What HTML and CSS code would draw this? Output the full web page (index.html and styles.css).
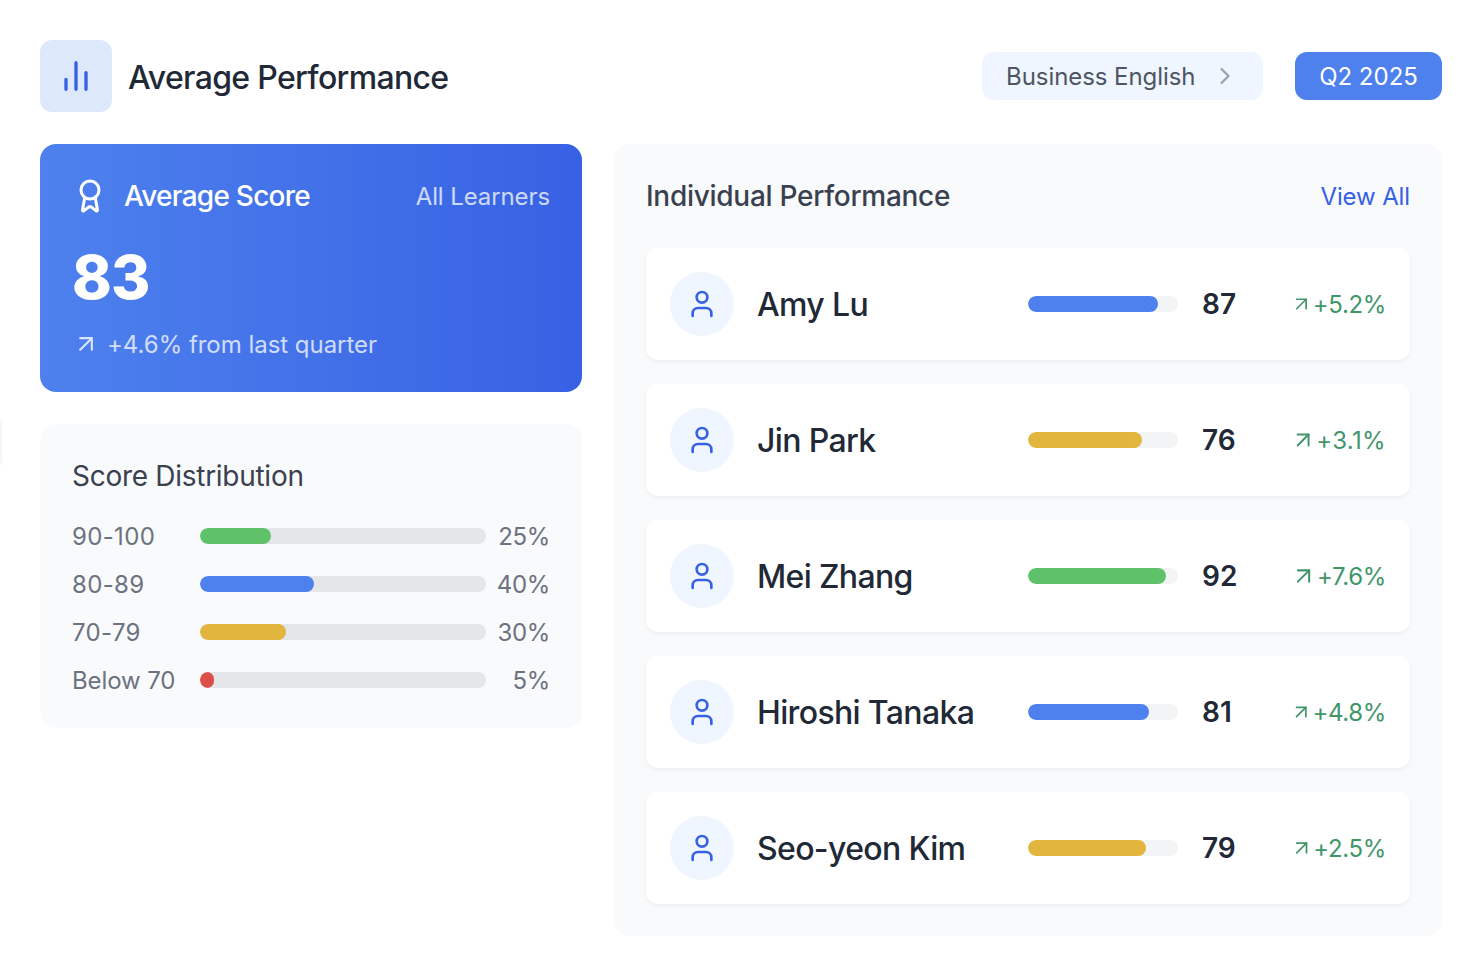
FILE: index.html
```html
<!DOCTYPE html>
<html lang="en">
<head>
<meta charset="utf-8">
<title>Average Performance</title>
<link rel="stylesheet" href="styles.css">
</head>
<body>
<svg class="sprite" aria-hidden="true">
  <symbol id="user" viewBox="0 0 24 24"><path d="M19 21v-2a4 4 0 0 0-4-4H9a4 4 0 0 0-4 4v2"/><circle cx="12" cy="7" r="4"/></symbol>
  <symbol id="arrow" viewBox="0 0 24 24"><path d="M7 7h10v10"/><path d="M7 17 17 7"/></symbol>
</svg>
<div class="edge-handle"></div>
<main class="page">
  <header class="header">
    <div class="brand">
      <div class="brand-icon"><svg class="icon icon-40" viewBox="0 0 24 24"><path d="M18 20V10M12 20V4M6 20v-6"/></svg></div>
      <h1 class="title">Average Performance</h1>
    </div>
    <div class="filters">
      <div class="course"><span class="course-text">Business English</span><svg class="icon icon-28 chevron" viewBox="0 0 24 24"><path d="m9 18 6-6-6-6"/></svg></div>
      <div class="quarter"><span class="quarter-text">Q2 2025</span></div>
    </div>
  </header>
  <div class="columns">
    <div class="left">
      <section class="score-card">
        <div class="score-head">
          <div class="score-label"><svg class="icon icon-36" viewBox="0 0 24 24"><path d="m15.477 12.89 1.515 8.526a.5.5 0 0 1-.81.47l-3.58-2.687a1 1 0 0 0-1.197 0l-3.586 2.686a.5.5 0 0 1-.81-.469l1.514-8.526"/><circle cx="12" cy="8" r="6"/></svg><span>Average Score</span></div>
          <span class="learners">All Learners</span>
        </div>
        <div class="score-value">83</div>
        <div class="score-trend"><svg class="icon icon-28"><use href="#arrow"/></svg><span>+4.6% from last quarter</span></div>
      </section>
      <section class="distribution">
        <h2 class="dist-title">Score Distribution</h2>
        <div class="dist-list">
          <div class="dist-row"><span class="range digits">90-100</span><div class="track"><div class="fill green" style="width:71px"></div></div><span class="share">25%</span></div>
          <div class="dist-row"><span class="range digits">80-89</span><div class="track"><div class="fill blue" style="width:114px"></div></div><span class="share">40%</span></div>
          <div class="dist-row"><span class="range digits">70-79</span><div class="track"><div class="fill yellow" style="width:86px"></div></div><span class="share">30%</span></div>
          <div class="dist-row"><span class="range">Below 70</span><div class="track"><div class="fill red" style="width:14px"></div></div><span class="share">5%</span></div>
        </div>
      </section>
    </div>
    <section class="individual">
      <div class="ind-head"><h2 class="ind-title">Individual Performance</h2><span class="view-all">View All</span></div>
      <div class="people">
        <article class="person"><div class="avatar"><svg class="icon icon-32"><use href="#user"/></svg></div><span class="name">Amy Lu</span><div class="bar"><div class="fill blue" style="width:130px"></div></div><span class="points">87</span><div class="change"><svg class="icon icon-28"><use href="#arrow"/></svg><span>+5.2%</span></div></article>
        <article class="person"><div class="avatar"><svg class="icon icon-32"><use href="#user"/></svg></div><span class="name">Jin Park</span><div class="bar"><div class="fill yellow" style="width:114px"></div></div><span class="points">76</span><div class="change loose"><svg class="icon icon-28"><use href="#arrow"/></svg><span>+3.1%</span></div></article>
        <article class="person"><div class="avatar"><svg class="icon icon-32"><use href="#user"/></svg></div><span class="name">Mei Zhang</span><div class="bar"><div class="fill green" style="width:138px"></div></div><span class="points">92</span><div class="change"><svg class="icon icon-28"><use href="#arrow"/></svg><span>+7.6%</span></div></article>
        <article class="person"><div class="avatar"><svg class="icon icon-32"><use href="#user"/></svg></div><span class="name">Hiroshi Tanaka</span><div class="bar"><div class="fill blue" style="width:121px"></div></div><span class="points">81</span><div class="change"><svg class="icon icon-28"><use href="#arrow"/></svg><span>+4.8%</span></div></article>
        <article class="person"><div class="avatar"><svg class="icon icon-32"><use href="#user"/></svg></div><span class="name">Seo-yeon Kim</span><div class="bar"><div class="fill yellow" style="width:118px"></div></div><span class="points">79</span><div class="change"><svg class="icon icon-28"><use href="#arrow"/></svg><span>+2.5%</span></div></article>
      </div>
    </section>
  </div>
</main>
</body>
</html>
```
FILE: styles.css
```css
* { box-sizing: border-box; }
body { margin: 0; background: #fff; color: #212936; font-family: Inter, "Liberation Sans", sans-serif; font-size: 24px; line-height: 32px; overflow: hidden; }
h1, h2 { margin: 0; }
.sprite { position: absolute; width: 0; height: 0; }
.edge-handle { position: absolute; left: -41px; top: 420px; width: 40px; height: 44px; box-shadow: 0 0 5px rgba(0, 0, 0, .16); }
.icon { fill: none; stroke: currentColor; stroke-width: 2; stroke-linecap: round; stroke-linejoin: round; display: block; }
.icon-28 { width: 28px; height: 28px; }
.icon-32 { width: 32px; height: 32px; }
.icon-36 { width: 36px; height: 36px; }
.icon-40 { width: 40px; height: 40px; }

.page { padding: 40px 38px 42px 40px; }
.header { display: flex; justify-content: space-between; align-items: center; height: 72px; }
.brand { display: flex; align-items: center; gap: 16px; }
.brand-icon { width: 72px; height: 72px; display: flex; align-items: center; justify-content: center; border-radius: 12px; background: #dde9fb; color: #3761e3; }
.title { font-size: 32px; line-height: 48px; font-weight: 500; letter-spacing: -.67px; padding-top: 3px; }
.filters { display: flex; gap: 32px; white-space: nowrap; }
.course { display: flex; align-items: center; justify-content: space-between; width: 281px; height: 48px; padding: 0 24px; border-radius: 12px; background: #eff6ff; color: #4d5562; }
.course-text { padding-top: 2px; letter-spacing: -.06px; }
.chevron { color: #9da3ae; }
.quarter { display: flex; align-items: center; justify-content: center; width: 147px; height: 48px; border-radius: 12px; background: #4e81ee; color: #fff; }
.quarter-text { padding-top: 2px; }

.columns { display: grid; grid-template-columns: 542px 828px; gap: 32px; align-items: start; margin-top: 32px; }
.left { display: grid; gap: 32px; }
.score-card { height: 248px; padding: 32px; border-radius: 16px; background: linear-gradient(to right, #4e81ee, #3761e3); color: #fff; }
.score-head { display: flex; align-items: center; justify-content: space-between; height: 40px; }
.score-label { display: flex; align-items: center; gap: 16px; font-size: 28px; font-weight: 500; letter-spacing: -.75px; }
.learners { padding-top: 2px; letter-spacing: -.1px; opacity: .75; }
.score-value { margin-top: 24px; height: 72px; font-size: 60px; line-height: 74px; font-weight: 800; letter-spacing: -.9px; }
.score-trend { display: flex; align-items: center; gap: 7px; margin-top: 16px; height: 32px; }
.score-trend span { padding-top: 2px; letter-spacing: -.03px; opacity: .75; }
.score-trend .icon { opacity: .8; stroke-width: 1.8; }
.distribution { height: 304px; padding: 32px; border-radius: 16px; background: #f9fafc; }
.dist-title { font-size: 28px; line-height: 40px; font-weight: 400; letter-spacing: -.28px; color: #394150; }
.dist-list { display: grid; gap: 16px; margin-top: 24px; }
.dist-row { display: flex; align-items: center; height: 32px; color: #6c727f; }
.range { width: 128px; padding-top: 2px; letter-spacing: -.1px; }
.digits { letter-spacing: .35px; }
.track { width: 286px; height: 16px; border-radius: 8px; background: #e5e6ea; overflow: hidden; }
.share { width: 64px; padding-top: 2px; text-align: right; letter-spacing: -.35px; }
.fill { height: 100%; border-radius: 8px; }
.green { background: #5fc26a; }
.blue { background: #4e81ee; }
.yellow { background: #e1b53e; }
.red { background: #dc5049; }

.individual { padding: 32px; border-radius: 16px; background: #f9fafc; }
.ind-head { display: flex; align-items: center; justify-content: space-between; height: 40px; }
.ind-title { font-size: 28px; font-weight: 500; letter-spacing: -.28px; color: #394150; }
.view-all { padding-top: 2px; letter-spacing: -.12px; color: #3761e3; }
.people { display: grid; gap: 24px; margin-top: 32px; }
.person { display: flex; align-items: center; height: 112px; padding: 24px; border-radius: 12px; background: #fff; box-shadow: 0 2px 4px rgba(0, 0, 0, .05); }
.avatar { width: 64px; height: 64px; display: flex; align-items: center; justify-content: center; border-radius: 50%; background: #eff6ff; color: #3761e3; }
.name { width: 271px; margin-left: 23px; padding-top: 2px; font-size: 32px; line-height: 48px; font-weight: 500; letter-spacing: -.65px; white-space: nowrap; }
.bar { width: 150px; height: 16px; border-radius: 8px; background: #f3f4f6; overflow: hidden; }
.points { width: 64px; margin-left: 24px; font-size: 28px; font-weight: 600; }
.change { display: flex; align-items: center; justify-content: flex-end; width: 96px; margin-left: auto; color: #419669; letter-spacing: -.35px; }
.change span { padding-top: 2px; }
.loose { letter-spacing: .35px; }
.change .icon { flex: 0 1 28px; min-width: 0; stroke-width: 1.8; }
```
